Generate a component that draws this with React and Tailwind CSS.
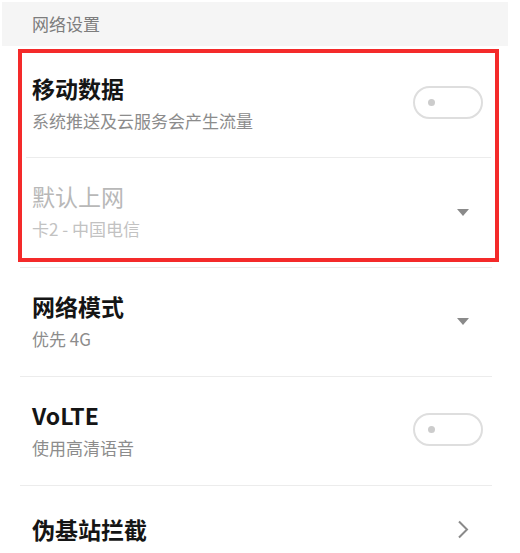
import React from "react";

const font = { fontFamily: '"Noto Sans CJK SC", "Noto Sans", sans-serif' };

const Toggle = () => (
  <div className="flex h-[33px] w-[70px] shrink-0 items-center rounded-full border-2 border-[#dedede] bg-white pl-[13px]">
    <div className="h-[7px] w-[7px] rounded-full bg-[#cccccc]" />
  </div>
);

const Caret = () => (
  <svg width="12" height="7" viewBox="0 0 12 7" className="shrink-0">
    <path d="M0 0 H12 L6 7 Z" fill="#8a8a8a" />
  </svg>
);

const Chevron = () => (
  <svg width="12" height="19" viewBox="0 0 12 19" className="shrink-0">
    <path d="M2 1.5 L10 9.5 L2 17.5" fill="none" stroke="#8a8a8a" strokeWidth="2" />
  </svg>
);

const Row = ({ title, sub, disabled, right, pt = "pt-[24px]", pb = "pb-[26px]", rightTop }) => (
  <div className={`flex items-start justify-between ${pt} ${pb}`}>
    <div className="flex flex-col gap-[8px]">
      <div
        className={`text-[23px] leading-[28px] ${
          disabled ? "font-normal text-[#b8b8b8]" : "font-bold text-[#151515]"
        }`}
      >
        {title}
      </div>
      {sub && (
        <div className={`text-[17px] leading-[22px] ${disabled ? "text-[#c2c2c2]" : "text-[#8c8c8c]"}`}>
          {sub}
        </div>
      )}
    </div>
    <div className={rightTop}>{right}</div>
  </div>
);

export default function App() {
  return (
    <div className="h-[553px] w-[520px] overflow-hidden bg-white pt-[2px]" style={font}>
      {/* section header */}
      <div className="ml-[2px] flex h-[44px] w-[506px] items-center bg-[#f5f5f5] pl-[30px] text-[17px] text-[#7d7d7d]">
        网络设置
      </div>

      {/* highlighted block */}
      <div className="ml-[18px] mt-[3px] w-[481px] border-4 border-[#f42a2a]">
        <div className="pl-[10px] pr-[12px]">
          <Row
            title="移动数据"
            sub="系统推送及云服务会产生流量"
            pt="pt-[21px]"
            pb="pb-[25px]"
            right={<Toggle />}
            rightTop="mt-[12px]"
          />
        </div>
        <div className="mx-[4px] h-px bg-[#ececec]" />
        <div className="pl-[10px] pr-[26px]">
          <Row
            title="默认上网"
            sub="卡2 - 中国电信"
            disabled
            pb="pb-[18px]"
            right={<Caret />}
            rightTop="mt-[27px]"
          />
        </div>
      </div>

      <div className="ml-[20px] mt-[5px] w-[472px] h-px bg-[#ececec]" />

      <div className="pl-[32px] pr-[51px]">
        <Row title="网络模式" sub="优先 4G" right={<Caret />} rightTop="mt-[26px]" />
      </div>
      <div className="ml-[20px] w-[472px] h-px bg-[#ececec]" />

      <div className="pl-[32px] pr-[37px]">
        <Row title="VoLTE" sub="使用高清语音" right={<Toggle />} rightTop="mt-[12px]" />
      </div>
      <div className="ml-[20px] w-[472px] h-px bg-[#ececec]" />

      <div className="pl-[32px] pr-[51px]">
        <Row title="伪基站拦截" pt="pt-[29px]" right={<Chevron />} rightTop="mt-[5px]" />
      </div>
    </div>
  );
}
